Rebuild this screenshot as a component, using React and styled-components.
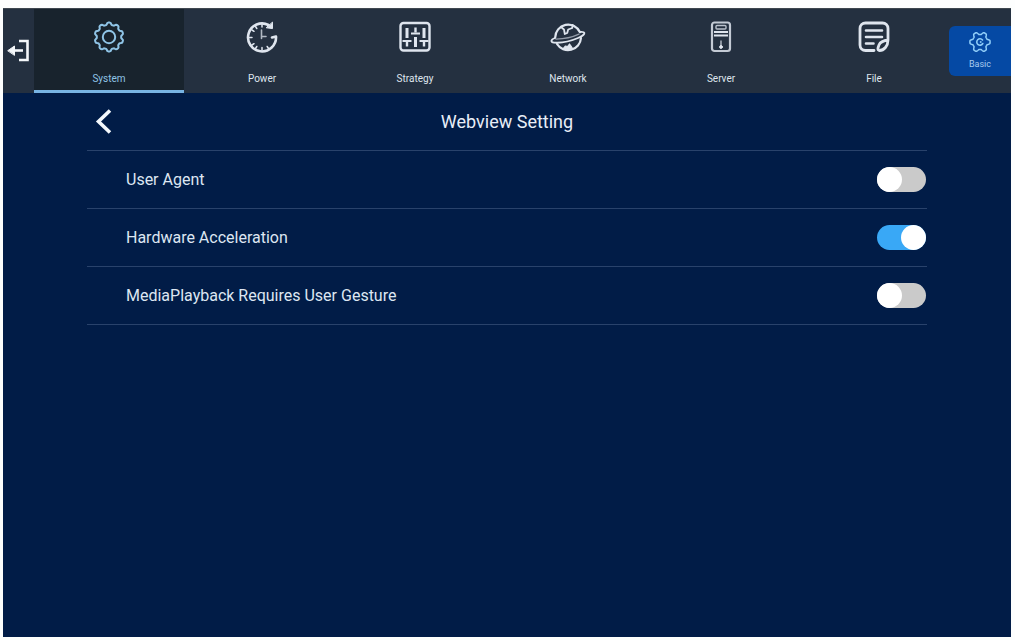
import React, { useState } from 'react';
import styled, { createGlobalStyle } from 'styled-components';

const GlobalStyle = createGlobalStyle`
  * {
    box-sizing: border-box;
  }

  body {
    margin: 0;
    background: #fdfefe;
    font-family: Roboto, 'Liberation Sans', sans-serif;
    color: #dde6f2;
  }

  #root {
    display: flex;
    min-height: 100vh;
    padding: 8px 4px 3px 3px;
  }

  button {
    padding: 0;
    border: 0;
    background: none;
    color: inherit;
    font: inherit;
    cursor: pointer;
  }

  svg {
    display: block;
    fill: none;
    stroke: currentColor;
    stroke-width: 2;
    stroke-linecap: round;
    stroke-linejoin: round;
  }
`;

const Screen = styled.div`
  flex: 1;
  background: #011c47;
`;

const Header = styled.header`
  display: flex;
  align-items: center;
  height: 85px;
  background: #243040;
  border-top: 1px solid #3f4750;
`;

const ExitButton = styled.button`
  display: flex;
  justify-content: center;
  width: 31px;
  color: #f4f7fa;
`;

const Tabs = styled.nav`
  flex: 1;
  align-self: stretch;
  display: grid;
  grid-template-columns: repeat(6, 1fr);
  gap: 3px;
`;

const Tab = styled.button`
  display: flex;
  flex-direction: column;
  align-items: center;
  padding-top: 11px;
  border-bottom: 3px solid ${({ $active }) => ($active ? '#78b4e4' : 'transparent')};
  background: ${({ $active }) => ($active ? '#18232d' : 'none')};
  color: ${({ $active }) => ($active ? '#8fc4e6' : '#dfe5ee')};
`;

const TabLabel = styled.span`
  margin-top: 18px;
  font-size: 10px;
  line-height: 14px;
`;

const BasicButton = styled.button`
  display: flex;
  flex-direction: column;
  align-items: center;
  width: 62px;
  height: 50px;
  padding-top: 4px;
  border-radius: 6px 0 0 6px;
  background: #0549a4;
  color: #8fcdf8;
  font-size: 9px;
  line-height: 12px;
`;

const BasicLabel = styled.span`
  margin-top: 4px;
  color: #a9cbee;
`;

const Content = styled.main`
  padding: 0 84px;
`;

const TitleBar = styled.div`
  display: grid;
  grid-template-columns: 40px 1fr 40px;
  align-items: center;
  height: 58px;
  border-bottom: 1px solid #29426b;
`;

const BackButton = styled.button`
  justify-self: start;
  padding-left: 8px;
  color: #f4f8fc;
`;

const Title = styled.h1`
  margin: 0;
  color: #e8eef7;
  font-size: 18px;
  font-weight: 400;
  line-height: 24px;
  text-align: center;
`;

const Row = styled.div`
  display: flex;
  align-items: center;
  justify-content: space-between;
  height: 58px;
  padding: 0 1px 0 39px;
  border-bottom: 1px solid #29426b;
  font-size: 16px;
  line-height: 20px;
`;

const Toggle = styled.input`
  appearance: none;
  display: flex;
  width: 49px;
  height: 25px;
  margin: 0;
  border-radius: 13px;
  background: #cacaca;
  cursor: pointer;

  &::before {
    content: '';
    width: 25px;
    height: 25px;
    border-radius: 50%;
    background: #fff;
  }

  &:checked {
    justify-content: flex-end;
    background: #39a8f6;
  }
`;

// closed outline that swings between two radii, used for both gears
const gearPath = (center, radius, depth, teeth, turn = 0) => {
  const points = [];
  for (let deg = 0; deg < 360; deg += 3) {
    const angle = (deg * Math.PI) / 180;
    const wave = Math.max(-1, Math.min(1, 1.6 * Math.cos(teeth * (angle - turn))));
    const r = radius + depth * wave;
    points.push(
      `${(center + r * Math.cos(angle)).toFixed(2)} ${(center + r * Math.sin(angle)).toFixed(2)}`,
    );
  }
  return `M${points.join('L')}Z`;
};

const SystemIcon = () => (
  <svg width="34" height="34" viewBox="0 0 34 34">
    <path d={gearPath(17, 13.3, 1.1, 10, Math.PI / 2)} />
    <circle cx="17" cy="17" r="6.2" />
  </svg>
);

const PowerIcon = () => (
  <svg width="34" height="34" viewBox="0 0 34 34">
    <path d="M23.5 5A14 14 0 1 0 31 16.500l-4 1" strokeWidth="2.6" />
    <path d="M21.500 7.800l6 .8V2.500z" fill="currentColor" strokeWidth="1" />
    <path d="M16.5 10v8.5M16.5 16.5h4.5" strokeWidth="1.6" opacity=".75" />
    <path d="M17 4.5v2.5M17 27.5v3M4.5 17.5h2.5M7 10l2 1.3M7 25l2-1.3M10.5 28.5l1.3-2M23.5 28.5l-1.3-2M10.5 6.5l1.3 2" strokeWidth="1.5" />
  </svg>
);

const StrategyIcon = () => (
  <svg width="34" height="34" viewBox="0 0 34 34">
    <rect x="2.5" y="3" width="29" height="27.5" rx="3" strokeWidth="2.4" />
    <path d="M9 8v10M26 8v10M17.5 17v10" strokeWidth="3" strokeLinecap="butt" />
    <path d="M17.5 7.5v5M9 22v4.5M26 22v4.5" strokeWidth="2.4" strokeLinecap="butt" />
    <path d="M4.5 21h9M13 13.5h9M21.5 21h9" strokeWidth="2" strokeLinecap="butt" />
  </svg>
);

const NetworkIcon = () => (
  <svg width="36" height="34" viewBox="0 0 36 34">
    <path d="M5.200 17.500A13 13 0 0 1 30 12.200M7 24A13 13 0 0 0 31 18" strokeWidth="2.2" />
    <path d="M5 18C.5 19.500.3 22.300 4 22.600c7 .6 17-1.600 24-4.600 7.500-3.200 8.500-6.500 2.500-6" strokeWidth="1.800" />
    <path d="M6 19.200c8-.2 17-2.200 23-5" strokeWidth="1.300" opacity=".6" />
    <path d="M11 7l3 2.500.8 4.500 2.400-1 1-3.500 4-1.500.5-3" strokeWidth="1.800" />
    <path d="M13 29l2.500-3 2 .5 2-2.500 1.500 2 1.500 2.500-4 1.500z" strokeWidth="1.200" fill="currentColor" />
  </svg>
);

const ServerIcon = () => (
  <svg width="34" height="34" viewBox="0 0 34 34">
    <rect x="8" y="2.500" width="18" height="28.500" rx="2.500" strokeWidth="2.200" opacity=".85" />
    <rect x="12" y="5.500" width="10" height="3.500" rx="1" strokeWidth="1.400" opacity=".8" />
    <path d="M10 12h14M10 15.500h14" strokeWidth="2" strokeLinecap="butt" />
    <path d="M17 21v5" strokeWidth="1.400" opacity=".8" />
    <circle cx="17" cy="27" r="1.400" fill="currentColor" strokeWidth="1" />
  </svg>
);

const FileIcon = () => (
  <svg width="34" height="34" viewBox="0 0 34 34">
    <path d="M17 30.500H8.500A5.500 5.500 0 0 1 3 25V8.500A5.500 5.500 0 0 1 8.500 3h17A5.500 5.500 0 0 1 31 8.500v11.500C31 26 27 30.500 22.500 30.500c-2.500 0-1.500-3-.5-5.500 1.500-3.500 4.500-4.500 9-5" strokeWidth="2.800" />
    <path d="M9 10.500h16M9 17h16M9 23.500h7.500" strokeWidth="2.600" />
  </svg>
);

const BasicIcon = () => (
  <svg width="24" height="24" viewBox="0 0 24 24">
    <path d={gearPath(12, 8.8, 1.3, 6)} strokeWidth="1.500" />
    <path d="M14.500 10a3.200 3.200 0 1 0 .3 3.500" strokeWidth="1.600" />
    <circle cx="12.500" cy="12" r=".5" strokeWidth="1" />
  </svg>
);

const ExitIcon = () => (
  <svg width="23" height="24" viewBox="0 0 23 24">
    <path d="M12 2h8.500v19H12" strokeWidth="2.600" strokeLinecap="butt" strokeLinejoin="miter" />
    <path d="M6 11.500h10" strokeWidth="2.600" strokeLinecap="butt" />
    <path d="M1 11.500l6.500-4.500v9z" fill="currentColor" strokeWidth="1" />
  </svg>
);

const BackIcon = () => (
  <svg width="18" height="28" viewBox="0 0 18 28">
    <path d="M15 2.500L3.500 13.500l11.500 11" strokeWidth="3.600" strokeLinecap="butt" strokeLinejoin="miter" />
  </svg>
);

const tabs = [
  { name: 'System', Icon: SystemIcon },
  { name: 'Power', Icon: PowerIcon },
  { name: 'Strategy', Icon: StrategyIcon },
  { name: 'Network', Icon: NetworkIcon },
  { name: 'Server', Icon: ServerIcon },
  { name: 'File', Icon: FileIcon },
];

const settings = [
  { id: 'user-agent', label: 'User Agent', on: false },
  { id: 'hardware-acceleration', label: 'Hardware Acceleration', on: true },
  { id: 'media-gesture', label: 'MediaPlayback Requires User Gesture', on: false },
];

const App = () => {
  const [activeTab, setActiveTab] = useState('System');

  return (
    <>
      <GlobalStyle />
      <Screen>
        <Header>
          <ExitButton type="button" aria-label="Exit">
            <ExitIcon />
          </ExitButton>
          <Tabs>
            {tabs.map(({ name, Icon }) => (
              <Tab
                key={name}
                type="button"
                $active={name === activeTab}
                onClick={() => setActiveTab(name)}
              >
                <Icon />
                <TabLabel>{name}</TabLabel>
              </Tab>
            ))}
          </Tabs>
          <BasicButton type="button">
            <BasicIcon />
            <BasicLabel>Basic</BasicLabel>
          </BasicButton>
        </Header>
        <Content>
          <TitleBar>
            <BackButton type="button" aria-label="Back">
              <BackIcon />
            </BackButton>
            <Title>Webview Setting</Title>
          </TitleBar>
          {settings.map(({ id, label, on }) => (
            <Row key={id}>
              <label htmlFor={id}>{label}</label>
              <Toggle id={id} type="checkbox" role="switch" defaultChecked={on} />
            </Row>
          ))}
        </Content>
      </Screen>
    </>
  );
};

export default App;
